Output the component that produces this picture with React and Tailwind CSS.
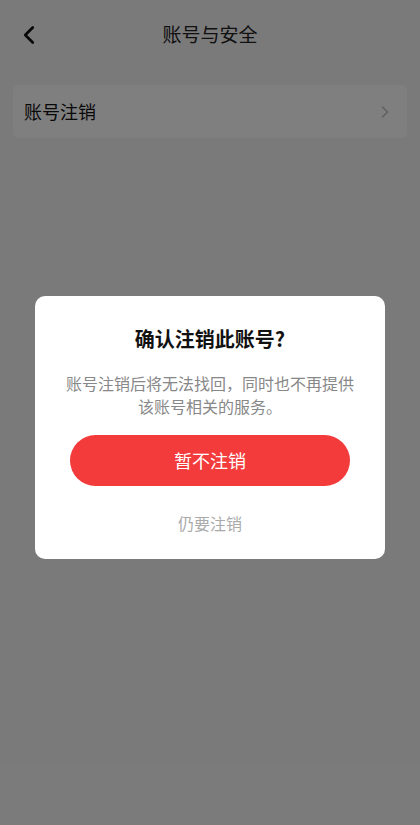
import { ChevronLeft, ChevronRight } from 'lucide-react'

const font = { fontFamily: '"Noto Sans CJK SC", "Noto Sans", sans-serif' }

const App = () => {
  return (
    <div style={font} className="relative w-[420px] h-[825px] bg-[#f5f5f5] overflow-hidden">
      <div className="h-[70px] flex items-center relative">
        <button className="absolute left-[14px] top-[20px] text-[#111]">
          <ChevronLeft size={30} strokeWidth={2.2} />
        </button>
        <h1 className="w-full text-center text-[19px] text-[#222] pb-[2px]">账号与安全</h1>
      </div>

      <div className="mx-[13px] mt-[15px] h-[53px] rounded-[6px] bg-white flex items-center justify-between pl-[11px] pr-[12px]">
        <span className="text-[18px] text-[#111]">账号注销</span>
        <ChevronRight size={20} strokeWidth={1.6} className="text-[#bbb]" />
      </div>

      <div className="absolute inset-0 bg-black/50 flex justify-center">
        <div className="mt-[296px] w-[350px] h-[263px] bg-white rounded-[10px] flex flex-col items-center">
          <h2 className="mt-[28px] text-[20px] font-bold text-[#111] leading-[30px]">确认注销此账号?</h2>
          <p className="mt-[18px] px-[20px] text-center text-[16px] text-[#888] leading-[23px]">
            账号注销后将无法找回，同时也不再提供
            <br />
            该账号相关的服务。
          </p>
          <button className="mt-[17px] w-[280px] h-[51px] rounded-full bg-[#f43b3b] text-white text-[18px]">
            暂不注销
          </button>
          <button className="mt-[27px] text-[16px] text-[#aaa] leading-[20px]">仍要注销</button>
        </div>
      </div>
    </div>
  )
}

export default App
